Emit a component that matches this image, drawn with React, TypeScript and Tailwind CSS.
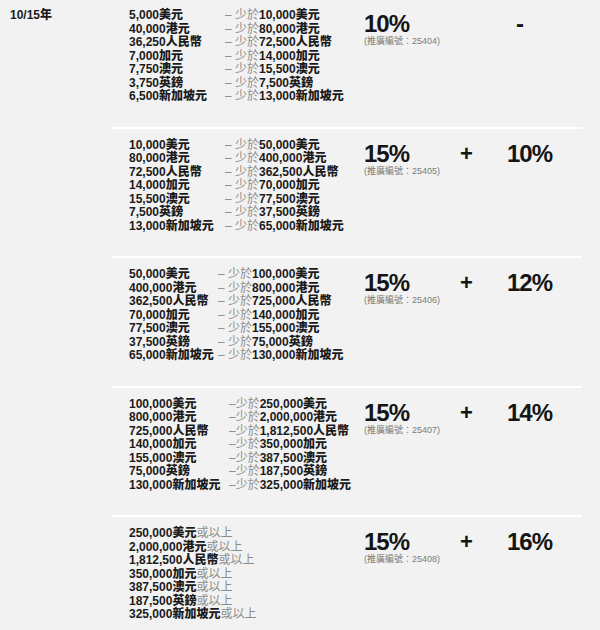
import React from 'react';

type Row = { from: string; to?: string };

type Tier = {
  col: string;
  sep: string;
  rows: Row[];
  rate: string;
  code: string;
  bonus?: string;
};

const tiers: Tier[] = [
  {
    col: 'w-[96px]',
    sep: '– 少於',
    rate: '10%',
    code: '25404',
    rows: [
      { from: '5,000美元', to: '10,000美元' },
      { from: '40,000港元', to: '80,000港元' },
      { from: '36,250人民幣', to: '72,500人民幣' },
      { from: '7,000加元', to: '14,000加元' },
      { from: '7,750澳元', to: '15,500澳元' },
      { from: '3,750英鎊', to: '7,500英鎊' },
      { from: '6,500新加坡元', to: '13,000新加坡元' },
    ],
  },
  {
    col: 'w-[96px]',
    sep: '– 少於',
    rate: '15%',
    code: '25405',
    bonus: '10%',
    rows: [
      { from: '10,000美元', to: '50,000美元' },
      { from: '80,000港元', to: '400,000港元' },
      { from: '72,500人民幣', to: '362,500人民幣' },
      { from: '14,000加元', to: '70,000加元' },
      { from: '15,500澳元', to: '77,500澳元' },
      { from: '7,500英鎊', to: '37,500英鎊' },
      { from: '13,000新加坡元', to: '65,000新加坡元' },
    ],
  },
  {
    col: 'w-[89px]',
    sep: '– 少於',
    rate: '15%',
    code: '25406',
    bonus: '12%',
    rows: [
      { from: '50,000美元', to: '100,000美元' },
      { from: '400,000港元', to: '800,000港元' },
      { from: '362,500人民幣', to: '725,000人民幣' },
      { from: '70,000加元', to: '140,000加元' },
      { from: '77,500澳元', to: '155,000澳元' },
      { from: '37,500英鎊', to: '75,000英鎊' },
      { from: '65,000新加坡元', to: '130,000新加坡元' },
    ],
  },
  {
    col: 'w-[100px]',
    sep: '–少於',
    rate: '15%',
    code: '25407',
    bonus: '14%',
    rows: [
      { from: '100,000美元', to: '250,000美元' },
      { from: '800,000港元', to: '2,000,000港元' },
      { from: '725,000人民幣', to: '1,812,500人民幣' },
      { from: '140,000加元', to: '350,000加元' },
      { from: '155,000澳元', to: '387,500澳元' },
      { from: '75,000英鎊', to: '187,500英鎊' },
      { from: '130,000新加坡元', to: '325,000新加坡元' },
    ],
  },
  {
    col: '',
    sep: '',
    rate: '15%',
    code: '25408',
    bonus: '16%',
    rows: [
      { from: '250,000美元' },
      { from: '2,000,000港元' },
      { from: '1,812,500人民幣' },
      { from: '350,000加元' },
      { from: '387,500澳元' },
      { from: '187,500英鎊' },
      { from: '325,000新加坡元' },
    ],
  },
];

const TierBlock = ({ tier, first }: { tier: Tier; first: boolean }) => (
  <div
    className={`flex pl-[17px] ${
      first ? 'pt-[9px] pb-[23px]' : 'border-t-2 border-white pt-[10px] pb-[23px]'
    }`}
  >
    {/* amount ranges */}
    <div className="w-[235px] text-[12px] leading-[13.5px]">
      {tier.rows.map((row, i) => (
        <div key={i} className="flex whitespace-nowrap">
          {row.to ? (
            <>
              <span className={`${tier.col} shrink-0 font-extrabold text-[#1b1b1b]`}>{row.from}</span>
              <span className="text-[#8c8c8c]">{tier.sep}</span>
              <span className="font-extrabold text-[#1b1b1b]">{row.to}</span>
            </>
          ) : (
            <>
              <span className="font-extrabold text-[#1b1b1b]">{row.from}</span>
              <span className="text-[#8c8c8c]">或以上</span>
            </>
          )}
        </div>
      ))}
    </div>

    {/* rate */}
    <div className="w-[96px] pt-[3px]">
      <div className="text-[24px] leading-[24px] font-bold tracking-[-1px] text-[#151515]">{tier.rate}</div>
      <div className="text-[9px] leading-[10px] text-[#7a7a7a] whitespace-nowrap">(推廣編號：{tier.code})</div>
    </div>

    <div className="w-[47px] pt-[3px] text-[22px] leading-[24px] font-bold text-[#151515]">
      {tier.bonus ? '+' : ''}
    </div>

    <div className="pt-[3px] text-[24px] leading-[24px] font-bold tracking-[-1px] text-[#151515]">
      {tier.bonus ?? <span className="ml-[9px]">-</span>}
    </div>
  </div>
);

export default function App() {
  return (
    <div
      className="w-[600px] h-[630px] overflow-hidden bg-[#f2f2f2] flex"
      style={{ fontFamily: '"Liberation Sans", "Noto Sans CJK TC", Arial, sans-serif' }}
    >
      <div className="w-[112px] shrink-0 pl-[10px] pt-[9px] text-[12px] leading-[13.5px] font-extrabold text-[#1b1b1b]">
        10/15年
      </div>
      <div className="w-[470px]">
        {tiers.map((tier, i) => (
          <TierBlock key={i} tier={tier} first={i === 0} />
        ))}
      </div>
    </div>
  );
}
